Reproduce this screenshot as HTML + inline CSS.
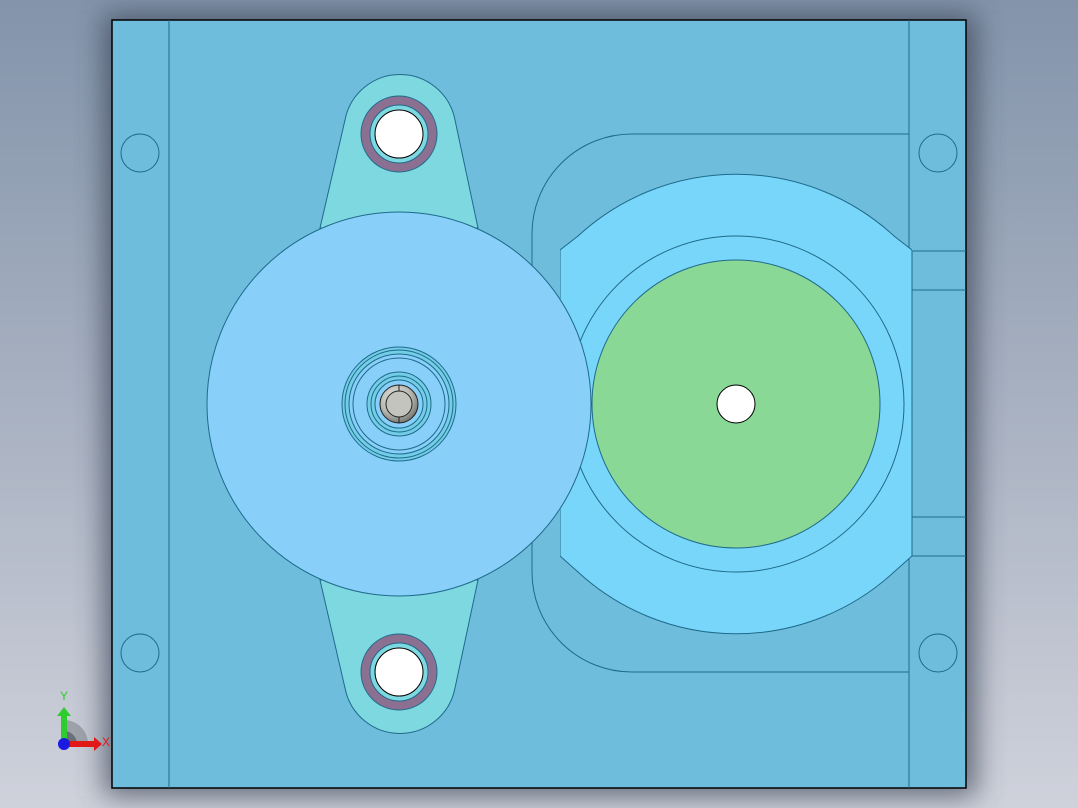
<!DOCTYPE html>
<html><head><meta charset="utf-8"><style>
html,body{margin:0;padding:0;width:1078px;height:808px;overflow:hidden;background:linear-gradient(#8394ab,#a8b1c1 50%,#cfd2db);}
svg{position:absolute;left:0;top:0}
</style></head><body>
<svg width="1078" height="808" viewBox="0 0 1078 808">
<defs>
<filter id="sh" x="-20%" y="-20%" width="140%" height="140%"><feGaussianBlur stdDeviation="14"/></filter>
<radialGradient id="nut" cx="0.4" cy="0.35" r="0.7"><stop offset="0" stop-color="#e8e8e4"/><stop offset="0.6" stop-color="#b8b8b2"/><stop offset="1" stop-color="#6e6e68"/></radialGradient>
<clipPath id="rc"><rect x="560" y="0" width="352" height="808"/></clipPath>
</defs>
<rect x="104" y="14" width="872" height="782" fill="#3a4556" opacity="0.75" filter="url(#sh)"/>
<g stroke="#1f6a8c" stroke-width="1" fill="none">
<rect x="112" y="20" width="854" height="768" fill="#6fbddd" stroke="#000" stroke-width="1.5"/>
<line x1="169" y1="20" x2="169" y2="788"/>
<line x1="909" y1="20" x2="909" y2="788"/>
<line x1="912" y1="251" x2="966" y2="251"/><line x1="912" y1="290" x2="966" y2="290"/>
<line x1="912" y1="517" x2="966" y2="517"/><line x1="912" y1="556" x2="966" y2="556"/>
<line x1="912" y1="251" x2="912" y2="556"/>
<circle cx="140" cy="153" r="19"/><circle cx="938" cy="153" r="19"/>
<circle cx="140" cy="653" r="19"/><circle cx="938" cy="653" r="19"/>
<path d="M909 134 H632 A100 100 0 0 0 532 234 V572 A100 100 0 0 0 632 672 H909"/>
<!-- right part -->
<path d="M560 250 L578 236 A233 233 0 0 1 894 236 L912 250 V556 L894 572 A233 233 0 0 1 578 572 L560 556 Z" fill="#77d6f9" clip-path="url(#rc)"/>
<circle cx="736" cy="404" r="168"/>
<circle cx="736" cy="404" r="144" fill="#8ad896"/>
<circle cx="736" cy="404" r="19" fill="#fff" stroke="#000"/>
<!-- lugs -->
<path d="M320 228 L345 120 A56 56 0 0 1 455 120 L478 228 Z" fill="#7ed8e0"/>
<path d="M320 580 L345 688 A56 56 0 0 0 455 688 L478 580 Z" fill="#7ed8e0"/>
<circle cx="399" cy="134" r="38" fill="#8b7091"/><circle cx="399" cy="134" r="29" fill="#7ed8e0"/><circle cx="399" cy="134" r="24" fill="#fff" stroke="#000"/>
<circle cx="399" cy="672" r="38" fill="#8b7091"/><circle cx="399" cy="672" r="29" fill="#7ed8e0"/><circle cx="399" cy="672" r="24" fill="#fff" stroke="#000"/>
<!-- big circle -->
<circle cx="399" cy="404" r="192" fill="#88cff9"/>
<circle cx="399" cy="404" r="57" fill="#73cde6"/>
<circle cx="399" cy="404" r="54"/>
<circle cx="399" cy="404" r="50" fill="#88cff9"/>
<circle cx="399" cy="404" r="46"/>
<circle cx="399" cy="404" r="32" fill="#73cde6"/>
<circle cx="399" cy="404" r="28"/>
<circle cx="399" cy="404" r="24" fill="#88cff9"/>
<circle cx="399" cy="404" r="19" fill="url(#nut)" stroke="#222"/>
<circle cx="399" cy="404" r="13" fill="#c4c4be" stroke="#222"/>
<line x1="399" y1="385" x2="399" y2="391" stroke="#222"/><line x1="399" y1="417" x2="399" y2="423" stroke="#222"/>
</g>
<!-- triad -->
<path d="M64 744 L64 720 A24 24 0 0 1 88 744 Z" fill="#6a6e76" opacity="0.45"/>
<path d="M64 744 L64 731 A13 13 0 0 1 77 744 Z" fill="#4a4e56" opacity="0.6"/>
<rect x="61" y="714" width="6" height="28" fill="#2ecc2e"/>
<path d="M57 716 L64 707 L71 716 Z" fill="#2ecc2e"/>
<rect x="66" y="741" width="30" height="6" fill="#e01818"/>
<path d="M94 737 L102 744 L94 751 Z" fill="#e01818"/>
<circle cx="64" cy="744" r="6" fill="#1a1ae0"/>
<text x="60" y="700" font-family="Liberation Sans, sans-serif" font-size="12" fill="#2ecc2e">Y</text>
<text x="102" y="746" font-family="Liberation Sans, sans-serif" font-size="12" fill="#e01818">X</text>
</svg>
</body></html>
